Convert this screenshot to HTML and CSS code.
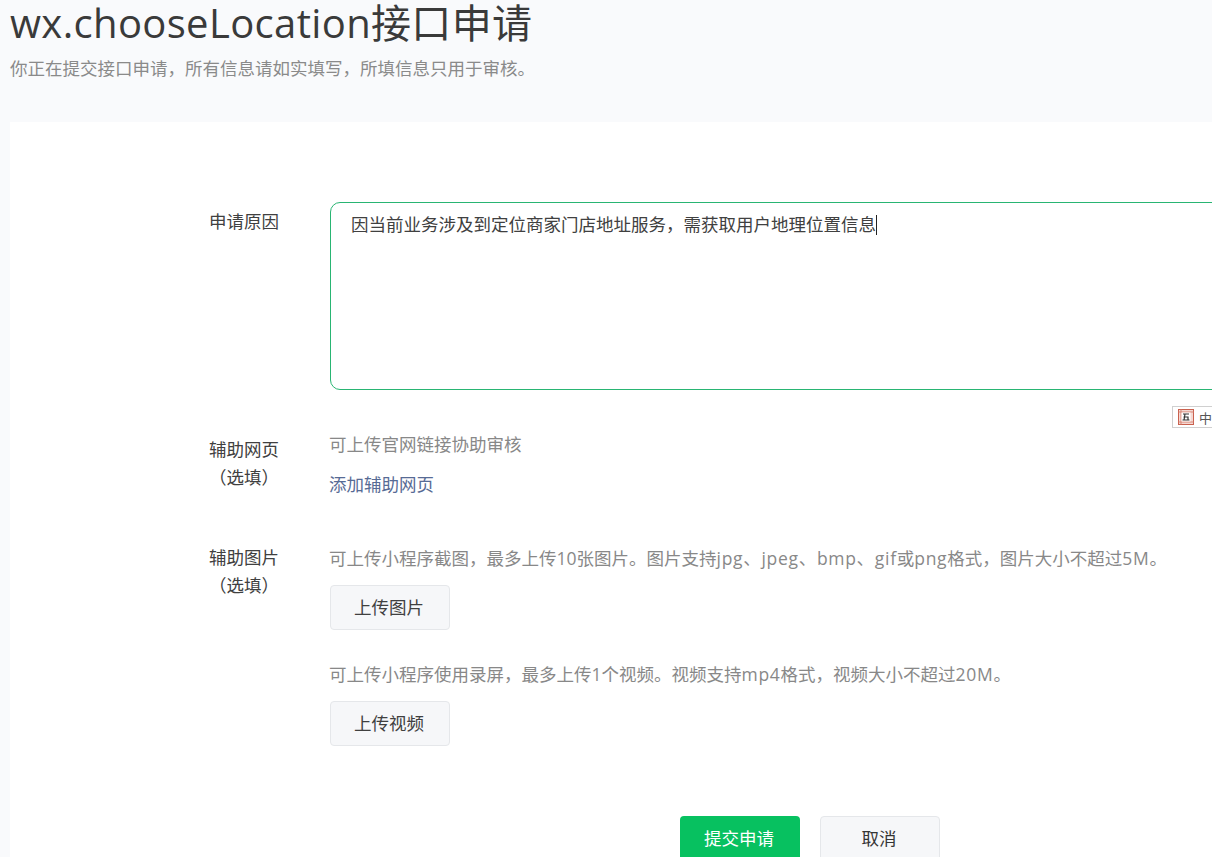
FILE: index.html
```html
<!DOCTYPE html>
<html lang="zh-CN">
<head>
<meta charset="utf-8">
<title>wx.chooseLocation接口申请</title>
<link rel="stylesheet" href="styles.css">
</head>
<body>
<div class="page">
  <header class="head">
    <h1 class="title">wx.chooseLocation接口申请</h1>
    <p class="sub">你正在提交接口申请，所有信息请如实填写，所填信息只用于审核。</p>
  </header>
  <main class="card">
    <div class="row row-reason">
      <div class="label">申请原因</div>
      <div class="control">
        <div class="textarea">因当前业务涉及到定位商家门店地址服务，需获取用户地理位置信息<span class="caret"></span></div>
      </div>
    </div>
    <div class="row row-web">
      <div class="label">辅助网页<br>（选填）</div>
      <div class="control">
        <p class="hint">可上传官网链接协助审核</p>
        <a class="link" href="#">添加辅助网页</a>
      </div>
    </div>
    <div class="row row-media">
      <div class="label">辅助图片<br>（选填）</div>
      <div class="control">
        <p class="hint">可上传小程序截图，最多上传10张图片。图片支持<span class="latin">jpg、jpeg、bmp、gif</span>或<span class="latin">png</span>格式，图片大小不超过<span class="latin">5M</span>。</p>
        <button class="btn btn-upload">上传图片</button>
        <p class="hint hint-video">可上传小程序使用录屏，最多上传1个视频。视频支持<span class="latin">mp4</span>格式，视频大小不超过<span class="latin">20M</span>。</p>
        <button class="btn btn-upload">上传视频</button>
      </div>
    </div>
    <div class="actions">
      <button class="btn btn-primary">提交申请</button>
      <button class="btn btn-cancel">取消</button>
    </div>
  </main>
  <div class="ime">
    <svg class="ime-icon" viewBox="0 0 16 16" width="16" height="16" aria-hidden="true">
      <rect x="0.5" y="0.5" width="15" height="15" fill="#f4d8d2" stroke="#c9604e"/>
      <path d="M3 0.5V15.5M0.5 3H15.5M0.5 13H15.5" stroke="#d98474" fill="none"/>
      <rect x="3.5" y="3.5" width="9" height="9" fill="#fff"/>
      <path d="M5 5H11M7 5L6 11M5.5 8H10V11M4.5 11H11.5" stroke="#333" stroke-width="1.2" fill="none"/>
    </svg>
    <span class="ime-text">中</span>
  </div>
</div>
</body>
</html>
```
FILE: styles.css
```css
html, body {
  margin: 0;
  height: 100%;
  overflow: hidden;
  background: #f9fafc;
}
body {
  font-family: "Open Sans", "Noto Sans CJK SC", sans-serif;
  color: #353535;
}
.page {
  position: relative;
  height: 857px;
  overflow: hidden;
}
.head {
  padding-left: 10px;
  height: 122px;
}
.title {
  margin: 0;
  font-size: 40px;
  font-weight: 400;
  letter-spacing: 0.35px;
  line-height: 46px;
  color: #3a3a3a;
}
.sub {
  margin: 10px 0 0;
  font-size: 17.5px;
  line-height: 24px;
  color: #8a8a8a;
}
.card {
  margin-left: 10px;
  width: 1500px;
  height: 800px;
  background: #fff;
  padding-top: 80px;
  box-sizing: border-box;
  font-size: 17.5px;
}
.row {
  display: flex;
}
.label {
  width: 70px;
  margin-left: 199px;
  margin-right: 50px;
  flex: none;
  line-height: 28px;
  text-align: center;
  color: #404040;
  white-space: nowrap;
}
.control {
  flex: 1;
}
.row-reason .label {
  padding-top: 5px;
}
.textarea {
  width: 1000px;
  height: 168px;
  margin-left: 1px;
  border: 1px solid #29b573;
  border-radius: 10px;
  padding: 8px 20px 10px;
  line-height: 26px;
  color: #404040;
  box-sizing: content-box;
}
.caret {
  display: inline-block;
  width: 1px;
  height: 20px;
  background: #222;
  vertical-align: -4px;
}
.row-web {
  margin-top: 43px;
}
.row-web .label {
  padding-top: 2px;
}
.hint {
  margin: 0;
  line-height: 26px;
  color: #888;
  white-space: nowrap;
}
.latin {
  letter-spacing: 0.7px;
}
.row-web .hint {
  margin-top: -2px;
}
.link {
  display: block;
  margin-top: 14px;
  line-height: 26px;
  color: #576b95;
  text-decoration: none;
}
.row-media {
  margin-top: 46px;
}
.row-media .control {
  margin-top: 2px;
}
.btn {
  display: block;
  font: inherit;
  border-radius: 4px;
  box-sizing: border-box;
  padding: 0 2px 2px 0;
  width: 120px;
}
.btn-upload {
  height: 45px;
  margin-top: 14px;
  margin-left: 1px;
  background: #f6f7f9;
  border: 1px solid #e5e7ea;
  color: #404040;
}
.hint-video {
  margin-top: 31px;
}
.actions {
  display: flex;
  gap: 20px;
  margin-top: 70px;
  margin-left: 670px;
}
.btn-primary {
  height: 45px;
  background: #07c160;
  border: 0;
  color: #fff;
}
.btn-cancel {
  height: 45px;
  background: #f6f7f9;
  border: 1px solid #e5e7ea;
  color: #353535;
}
.ime {
  position: absolute;
  left: 1172px;
  top: 406px;
  width: 60px;
  height: 22px;
  box-sizing: border-box;
  border: 1px solid #d0d0d0;
  background: #fff;
  display: flex;
  align-items: center;
  padding-left: 5px;
  gap: 5px;
}
.ime-text {
  font-size: 13px;
  color: #555;
}
```
